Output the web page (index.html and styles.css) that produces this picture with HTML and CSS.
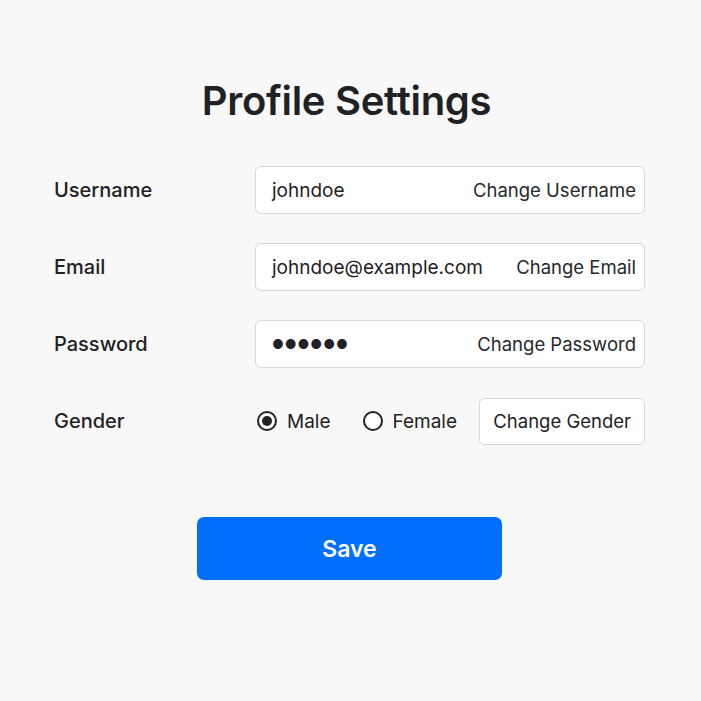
FILE: index.html
```html
<!DOCTYPE html>
<html>
<head>
<meta charset="utf-8">
<link rel="stylesheet" href="styles.css">
</head>
<body>
<div class="page">
  <h1 class="title">Profile Settings</h1>
  <div class="form">
    <div class="row">
      <div class="label">Username</div>
      <div class="field"><span class="value">johndoe</span><span class="action">Change Username</span></div>
    </div>
    <div class="row">
      <div class="label">Email</div>
      <div class="field"><span class="value">johndoe@example.com</span><span class="action">Change Email</span></div>
    </div>
    <div class="row">
      <div class="label">Password</div>
      <div class="field"><span class="value dots">●●●●●●</span><span class="action">Change Password</span></div>
    </div>
    <div class="row">
      <div class="label">Gender</div>
      <div class="gender">
        <span class="radio checked"></span><span class="opt">Male</span>
        <span class="radio"></span><span class="opt last">Female</span>
        <span class="gbtn">Change Gender</span>
      </div>
    </div>
  </div>
  <button class="save">Save</button>
</div>
</body>
</html>
```
FILE: styles.css
```css
html, body {
  margin: 0;
  padding: 0;
  background: #f8f8f8;
  font-family: Inter, "Noto Sans", sans-serif;
  color: #1f2125;
}
.page {
  width: 591px;
  margin-left: 54px;
  padding-top: 76px;
  display: flex;
  flex-direction: column;
  align-items: center;
}
.title {
  margin: 0 0 0 -6px;
  font-size: 40px;
  font-weight: 600;
  line-height: 50px;
  letter-spacing: -0.3px;
  color: #1f2125;
}
.form {
  width: 100%;
  margin-top: 40px;
  display: flex;
  flex-direction: column;
  gap: 29px;
}
.row {
  display: grid;
  grid-template-columns: 201px 1fr;
  align-items: center;
}
.label {
  font-size: 20px;
  font-weight: 500;
  color: #1f2125;
}
.field {
  height: 48px;
  box-sizing: border-box;
  border: 1px solid #d6d6d6;
  border-radius: 6px;
  background: #fff;
  display: flex;
  align-items: center;
  justify-content: space-between;
  padding: 0 8px 0 16px;
  font-size: 19px;
  white-space: nowrap;
}
.value { color: #1f2125; }
.dots { font-size: 13px; letter-spacing: 0.9px; }
.action { color: #26282c; font-size: 18.5px; }
.gender {
  height: 48px;
  display: flex;
  align-items: center;
  font-size: 19px;
  white-space: nowrap;
}
.radio {
  flex-shrink: 0;
  width: 20px;
  height: 20px;
  box-sizing: border-box;
  border: 2px solid #222;
  border-radius: 50%;
  background: #fff;
  margin-left: 2px;
  position: relative;
}
.radio.checked::after {
  content: "";
  position: absolute;
  left: 3px;
  top: 3px;
  width: 10px;
  height: 10px;
  border-radius: 50%;
  background: #222;
}
.opt { margin-left: 10px; margin-right: 30px; }
.opt.last { margin-right: 12px; }
.gbtn {
  flex-shrink: 0;
  margin-left: auto;
  height: 47px;
  box-sizing: border-box;
  border: 1px solid #d6d6d6;
  border-radius: 5px;
  background: #fff;
  display: flex;
  align-items: center;
  padding: 0 13px;
  font-size: 18.5px;
}
.save {
  margin-top: 72px;
  width: 305px;
  height: 63px;
  border: none;
  border-radius: 7px;
  background: #006ffb;
  color: #fff;
  font-family: Inter, sans-serif;
  font-size: 23px;
  font-weight: 600;
}
```
